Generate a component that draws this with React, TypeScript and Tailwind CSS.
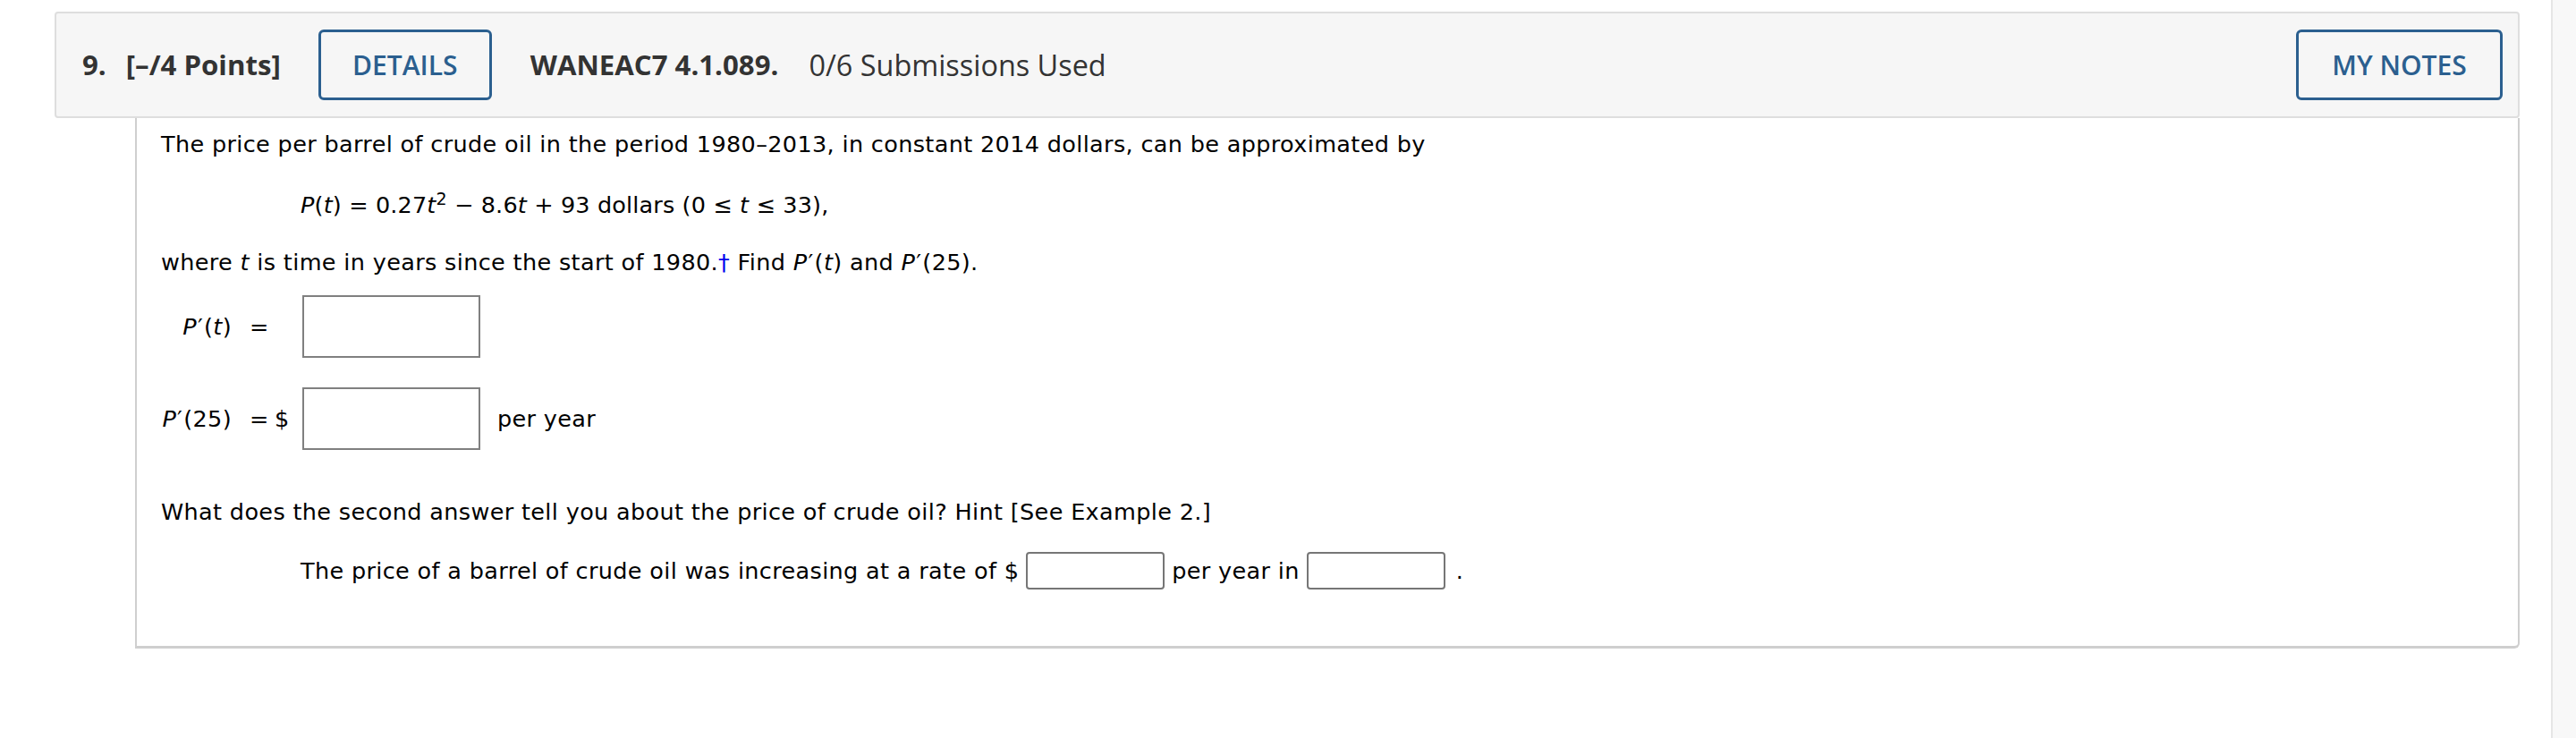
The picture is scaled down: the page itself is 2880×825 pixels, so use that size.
import React from "react";

const Var = ({ children }: { children: React.ReactNode }) => <i>{children}</i>;

const Prime = () => <span className="px-[1px]">′</span>;

function BigBox() {
  return <div className="h-[70px] w-[199px] border-2 border-[#808080] bg-white" />;
}

function SmallBox() {
  return <div className="h-[42px] w-[155px] rounded-[4px] border-2 border-[#767676] bg-white" />;
}

export default function App() {
  return (
    <div className="flex min-h-[825px] w-full bg-white">
      <main className="flex-1 pl-[61px] pr-[35px] pt-[13px]">
        <header className="flex items-center justify-between rounded-[4px] border-2 border-[#dedede] bg-[#f6f6f6] pl-[29px] pr-[17px] py-[18px] font-['Open_Sans',sans-serif] text-[31.2px] text-[#333]">
          <div className="flex items-center">
            <span className="font-bold">9.</span>
            <span className="ml-[22px] font-bold">[–/4 Points]</span>
            <button
              type="button"
              className="ml-[42px] flex h-[79px] w-[194px] items-center justify-center rounded-[6px] border-[3px] border-[#2b5f8f] text-[30px] font-semibold text-[#2b5f8f]"
            >
              DETAILS
            </button>
            <span className="ml-[43px] font-bold">WANEAC7 4.1.089.</span>
            <span className="ml-[34px] text-[32.4px]">0/6 Submissions Used</span>
          </div>
          <button
            type="button"
            className="flex h-[79px] w-[231px] items-center justify-center rounded-[6px] border-[3px] border-[#2b5f8f] text-[30px] font-semibold text-[#2b5f8f]"
          >
            MY NOTES
          </button>
        </header>

        <section className="ml-[90px] flex h-[593px] flex-col rounded-br-[6px] border-b-[3px] border-l-2 border-r-2 border-[#cfcfcf] pl-[27px] pt-[11px] font-['DejaVu_Sans',Verdana,sans-serif] text-[25.5px] tracking-[0.35px] text-black">
          <p className="leading-[36px]">
            The price per barrel of crude oil in the period 1980–2013, in constant 2014 dollars, can be approximated by
          </p>
          <p className="mt-[32px] pl-[156px] leading-[36px] tracking-[0.15px]">
            <Var>P</Var>(<Var>t</Var>) = 0.27<Var>t</Var>
            <sup className="text-[19px]">2</sup> − 8.6<Var>t</Var> + 93 dollars (0 ≤ <Var>t</Var> ≤ 33),
          </p>
          <p className="mt-[28px] leading-[36px]">
            where <Var>t</Var> is time in years since the start of 1980.<span className="text-[#0000ee]">†</span> Find{" "}
            <Var>P</Var>
            <Prime />(<Var>t</Var>) and <Var>P</Var>
            <Prime />
            (25).
          </p>

          <div className="mt-[19px] flex items-center">
            <span className="w-[79px] text-right">
              <Var>P</Var>
              <Prime />(<Var>t</Var>)
            </span>
            <span className="ml-[20px] w-[28px]">=</span>
            <span className="w-[31px]" />
            <BigBox />
          </div>
          <div className="mt-[33px] flex items-center">
            <span className="w-[79px] text-right">
              <Var>P</Var>
              <Prime />
              (25)
            </span>
            <span className="ml-[20px] w-[28px]">=</span>
            <span className="w-[31px]">$</span>
            <BigBox />
            <span className="ml-[19px]">per year</span>
          </div>

          <p className="mt-[51px] leading-[36px]">
            What does the second answer tell you about the price of crude oil? Hint [See Example 2.]
          </p>
          <div className="mt-[27px] flex items-center pl-[156px]">
            <span>The price of a barrel of crude oil was increasing at a rate of $</span>
            <span className="ml-[8px]">
              <SmallBox />
            </span>
            <span className="ml-[8px]">per year in</span>
            <span className="ml-[8px]">
              <SmallBox />
            </span>
            <span className="ml-[12px]">.</span>
          </div>
        </section>
      </main>
      <aside className="w-[28px] shrink-0 border-l-2 border-[#e6e6e6] bg-[#f8f8f8]" />
    </div>
  );
}
